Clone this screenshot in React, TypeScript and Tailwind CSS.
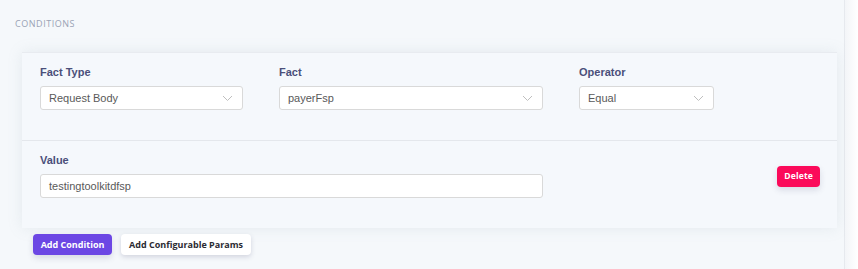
import React from "react";

const Chevron: React.FC = () => (
  <svg width="11" height="7" viewBox="0 0 11 7" fill="none" className="text-[#bfbfbf]">
    <path d="M1 1l4.5 4.5L10 1" stroke="currentColor" strokeWidth="1" />
  </svg>
);

const Select: React.FC<{ value: string; width: string }> = ({ value, width }) => (
  <div
    className={`${width} h-[24px] flex items-center justify-between bg-white border border-[#d9d9d9] rounded-[3px] pl-[8px] pr-[9px] text-[11px] text-[#595959]`}
  >
    <span>{value}</span>
    <Chevron />
  </div>
);

const Label: React.FC<{ children: React.ReactNode }> = ({ children }) => (
  <div className="text-[11px] font-bold text-[#4a4f7a] leading-none mb-[8px]">{children}</div>
);

export default function App() {
  return (
    <div className="w-[858px] h-[269px] flex bg-[#f5f8fb] overflow-hidden" style={{ fontFamily: '"Liberation Sans", Arial, sans-serif' }}>
      <div className="w-[845px] border-r border-[#e6e9ee] pt-[19px] pl-[15px]">
        <div
          className="text-[9px] tracking-[0.06em] uppercase text-[#9aa3b5] leading-none"
          style={{ fontFamily: '"Open Sans", sans-serif' }}
        >
          Conditions
        </div>

        <div className="mt-[24px] ml-[7px] w-[815px] bg-[#f5f8fc] border-t border-[#e8ebf0] shadow-[0_0_14px_rgba(136,152,170,0.15)]">
          <div className="flex pl-[18px] pt-[14px] pb-[30px] border-b border-[#e4e7ec]">
            <div className="w-[239px]">
              <Label>Fact Type</Label>
              <Select value="Request Body" width="w-[203px]" />
            </div>
            <div className="w-[300px]">
              <Label>Fact</Label>
              <Select value="payerFsp" width="w-[264px]" />
            </div>
            <div>
              <Label>Operator</Label>
              <Select value="Equal" width="w-[135px]" />
            </div>
          </div>

          <div className="flex items-start pl-[18px] pr-[17px] pt-[14px] pb-[30px]">
            <div>
              <Label>Value</Label>
              <div className="w-[503px] h-[24px] flex items-center bg-white border border-[#d9d9d9] rounded-[3px] pl-[8px] text-[11px] text-[#595959]">
                testingtoolkitdfsp
              </div>
            </div>
            <button
              className="ml-auto mt-[11px] h-[21px] px-[7px] rounded-[4px] bg-[#fb0a5a] text-white text-[8.5px] font-bold tracking-[0.02em] shadow-[0_3px_6px_rgba(50,50,93,0.15)]"
              style={{ fontFamily: '"Open Sans", sans-serif' }}
            >
              Delete
            </button>
          </div>
        </div>

        <div className="flex gap-[9px] mt-[6px] ml-[18px]" style={{ fontFamily: '"Open Sans", sans-serif' }}>
          <button className="h-[21px] w-[79px] rounded-[4px] bg-[#6c47e4] text-white text-[9px] font-bold shadow-[0_3px_6px_rgba(50,50,93,0.15)]">
            Add Condition
          </button>
          <button className="h-[21px] w-[130px] rounded-[4px] bg-white text-[#2b2b33] text-[9px] font-bold shadow-[0_2px_5px_rgba(50,50,93,0.18)]">
            Add Configurable Params
          </button>
        </div>
      </div>
      <div className="flex-1 bg-gradient-to-r from-[#f3f5f8] to-white" />
    </div>
  );
}
